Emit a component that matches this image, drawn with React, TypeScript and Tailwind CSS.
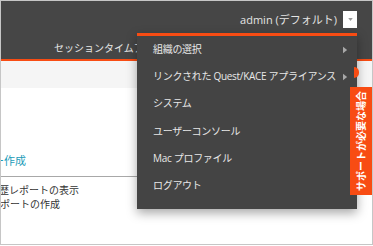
import React from "react";

const items = [
  { label: "組織の選択", sub: true },
  { label: "リンクされた Quest/KACE アプライアンス", sub: true },
  { label: "システム" },
  { label: "ユーザーコンソール" },
  { label: "Mac プロファイル" },
  { label: "ログアウト" },
];

function Caret({ className }: { className: string }) {
  return (
    <svg viewBox="0 0 6 8" className={className}>
      <path d="M0 0 L5 4 L0 8 Z" fill="currentColor" />
    </svg>
  );
}

export default function App() {
  return (
    <div className="relative w-[373px] h-[245px] overflow-hidden border border-[#c6c6c6] bg-white font-['Open_Sans','Noto_Sans_CJK_JP',sans-serif]">
      {/* header */}
      <div className="h-[58px] bg-[#464646]">
        <div className="flex items-center justify-end gap-[6px] pt-[10px] pr-[15px]">
          <span className="text-[11px] leading-[17px] text-[#e4e4e4]">
            admin (デフォルト)
          </span>
          <div className="flex h-[17px] w-[14px] items-center justify-center bg-white">
            <svg viewBox="0 0 6 4" className="h-[3px] w-[5px] text-[#9a9a9a]">
              <path d="M0 0 L6 0 L3 4 Z" fill="currentColor" />
            </svg>
          </div>
        </div>
        <div className="mt-[13px] pl-[53px] text-[10px] leading-[14px] text-[#e8e8e8] whitespace-nowrap">
          セッションタイムアウト
        </div>
      </div>
      <div className="h-[2px] bg-[#f84c13]" />
      <div className="h-[27px] bg-[#f5f5f5]" />

      {/* content */}
      <div className="pt-[65px] whitespace-nowrap">
        <div className="-ml-[8px] text-[11px] leading-[16px] text-[#1b9bb8]">
          ー作成
        </div>
        <div className="mt-[7px] border-b border-[#a8a8a8]" />
        <div className="mt-[6px] -ml-[2px] text-[10px] leading-[14px] text-[#333]">
          歴レポートの表示
        </div>
        <div className="-ml-[1px] text-[10px] leading-[14px] text-[#333]">
          ポートの作成
        </div>
      </div>

      {/* user menu */}
      <div className="absolute left-[136px] top-[32px] w-[220px] border-t-[3px] border-[#f84c13] bg-[#444444] pb-[10px] shadow-[0_4px_10px_rgba(0,0,0,0.35)]">
        {items.map((it) => (
          <div
            key={it.label}
            className="flex h-[27.2px] items-center justify-between pl-[16px] pr-[9px] text-[10px] tracking-[-0.3px] text-[#e8e8e8] whitespace-nowrap"
          >
            <span>{it.label}</span>
            {it.sub && <Caret className="h-[8px] w-[5px] text-[#a8a8a8]" />}
          </div>
        ))}
      </div>
      <div className="absolute left-[353px] top-[66px] h-[11px] w-[5px] rounded-r-full bg-[#f84c13]" />

      {/* side tab */}
      <div className="absolute left-[349px] top-[86px] flex h-[108px] w-[22px] items-center justify-center bg-[#f84c13]">
        <span className="rotate-180 text-[10px] font-bold leading-none text-white [writing-mode:vertical-rl] [text-orientation:sideways]">
          サポートが必要な場合
        </span>
      </div>
    </div>
  );
}
